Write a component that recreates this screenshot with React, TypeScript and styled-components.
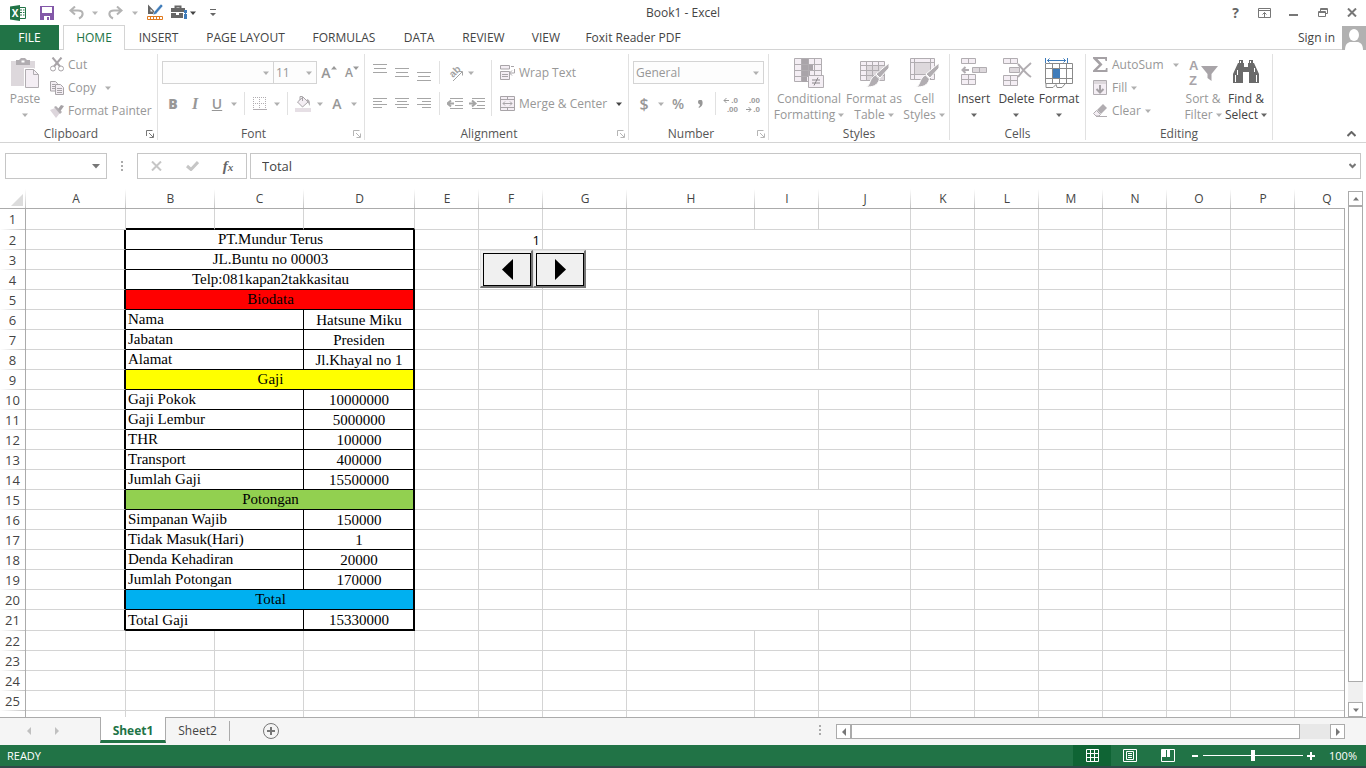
import React from "react";
import styled, { createGlobalStyle, css } from "styled-components";

const UI = `"Open Sans", "Noto Sans", sans-serif`;
const SERIF = `"Liberation Serif", "Times New Roman", serif`;
const GREEN = "#217346";
const LINE = "#d4d4d4";
const EDGE = "#ababab";
const MUTED = "#979797";
const INK = "#444444";
const ICON = "#b1adb1";
const PALE = "#f4eef4";

const GlobalStyle = createGlobalStyle`
  * { box-sizing: border-box; }
  body { margin: 0; background: #fff; font: 12px/16px ${UI}; color: ${INK}; }
  button, input, select { font: inherit; color: inherit; margin: 0; }
  svg { display: block; flex: none; }
`;

/* ---------- shared parts ---------- */

const Window = styled.div`
  display: flex;
  flex-direction: column;
  height: 100vh;
  overflow: hidden;
`;

const PlainButton = styled.button`
  display: flex;
  align-items: center;
  justify-content: center;
  padding: 0;
  border: 0;
  background: none;
  white-space: nowrap;
`;

const Caret = ({ color = MUTED, up = false }: { color?: string; up?: boolean }) => (
  <svg width="6" height="4" viewBox="0 0 6 4" fill={color} aria-hidden="true">
    <path d={up ? "M3 0L6 3.5H0z" : "M0 0.5H6L3 4z"} />
  </svg>
);

/* ---------- title bar ---------- */

const TitleBar = styled.header`
  display: grid;
  grid-template-columns: 1fr auto 1fr;
  align-items: center;
  height: 25px;
  flex: none;
`;

const QuickAccess = styled.div`
  display: flex;
  align-items: center;
  height: 22px;
  padding-left: 3px;
`;

const QuickButton = styled(PlainButton)<{ $w: number }>`
  width: ${(p) => p.$w}px;
  height: 22px;
`;

const WindowButtons = styled.div`
  display: flex;
  justify-content: flex-end;
`;

const WindowButton = styled(PlainButton)`
  width: 29px;
  height: 22px;
  font-size: 14px;
  font-weight: 700;
  color: #666;
`;

const Title = styled.h1`
  margin: 0;
  font-size: 12px;
  font-weight: 400;
  line-height: 24px;
`;

/* ---------- ribbon tabs ---------- */

const TabRow = styled.nav`
  display: flex;
  height: 25px;
  flex: none;
  box-shadow: inset 0 -1px ${LINE};
`;

const FileTab = styled(PlainButton)`
  width: 59px;
  margin-right: 4px;
  background: ${GREEN};
  color: #fff;
`;

const RibbonTab = styled(PlainButton)<{ $w: number; $active?: boolean }>`
  width: ${(p) => p.$w}px;
  ${(p) =>
    p.$active &&
    css`
      color: ${GREEN};
      background: #fff;
      border: 1px solid ${LINE};
      border-bottom: 0;
    `}
`;

const Account = styled.div`
  display: flex;
  align-items: center;
  gap: 7px;
  margin-left: auto;
`;

const SignIn = styled.a`
  color: ${INK};
  text-decoration: none;
  white-space: nowrap;
`;

/* ---------- ribbon ---------- */

const Ribbon = styled.div`
  display: flex;
  height: 93px;
  flex: none;
  padding: 4px 0 2px;
  border-bottom: 1px solid ${LINE};
`;

const GroupBox = styled.section<{ $w: number }>`
  display: flex;
  flex-direction: column;
  flex: none;
  width: ${(p) => p.$w}px;
  height: 86px;
  border-right: 1px solid #e1e1e1;
`;

const GroupBody = styled.div<{ $pad: number }>`
  display: flex;
  height: 74px;
  padding-left: ${(p) => p.$pad}px;
`;

const GroupFoot = styled.div`
  display: flex;
  align-items: center;
  height: 12px;
`;

const GroupName = styled.h2`
  flex: 1;
  margin: 0;
  font-size: 12px;
  font-weight: 400;
  line-height: 12px;
  text-align: center;
  color: #555;
`;

const Launcher = styled(PlainButton)`
  width: 15px;
  height: 12px;
`;

const LabelButton = styled(PlainButton)`
  justify-content: flex-start;
  gap: 4px;
  height: 23px;
  color: ${MUTED};
`;

const Stack = styled.div<{ $w?: number }>`
  display: flex;
  flex-direction: column;
  ${(p) => p.$w && `width: ${p.$w}px;`}

  ${LabelButton} { padding-bottom: 2px; }
`;

const ToolRows = styled.div`
  display: flex;
  flex-direction: column;
  gap: 8px;
  padding-top: 7px;
`;

const ToolRow = styled.div`
  display: flex;
  align-items: center;
  height: 23px;
`;

const ToolButton = styled(PlainButton)<{ $w?: number; $raised?: boolean; $size?: number }>`
  width: ${(p) => p.$w ?? 22}px;
  height: 22px;
  font-size: ${(p) => p.$size ?? 14}px;
  font-weight: 600;
  color: ${MUTED};

  ${(p) => p.$raised && "svg { align-self: flex-start; margin-top: 4px; }"}
`;

const ItalicMark = styled.i`
  font-family: ${SERIF};
  font-weight: 700;
`;

const Divider = styled.span<{ $tall?: boolean }>`
  flex: none;
  width: 1px;
  height: ${(p) => (p.$tall ? 56 : 23)}px;
  margin: ${(p) => (p.$tall ? "6px 4px 0 0" : "0 4px")};
  background: #e1e1e1;
`;

const Gap = styled.span<{ $w: number }>`
  width: ${(p) => p.$w}px;
`;

const BigButton = styled(PlainButton)<{ $w: number; $on?: boolean }>`
  flex-direction: column;
  justify-content: flex-start;
  gap: 3px;
  width: ${(p) => p.$w}px;
  padding-top: 4px;
  color: ${(p) => (p.$on ? INK : MUTED)};
`;

const BigLabel = styled.span`
  display: flex;
  flex-direction: column;
  align-items: center;
`;

const BigLine = styled.span`
  display: flex;
  align-items: center;
  justify-content: center;
  gap: 3px;
  height: 16px;
`;

const ComboBox = styled.div<{ $w: number }>`
  display: grid;
  align-items: center;
  width: ${(p) => p.$w}px;
  height: 23px;
  margin-right: -1px;
  border: 1px solid ${LINE};

  svg {
    grid-area: 1 / 1;
    justify-self: end;
    margin-right: 4px;
    pointer-events: none;
  }
`;

const ComboSelect = styled.select`
  grid-area: 1 / 1;
  width: 100%;
  height: 21px;
  padding: 0 2px;
  border: 0;
  appearance: none;
  background: #fdfdfd;
  color: ${MUTED};
  opacity: 1;
`;

const Collapse = styled(PlainButton)`
  align-self: flex-end;
  width: 20px;
  height: 12px;
  margin-left: auto;
  margin-right: 5px;
`;

const Combo = ({ label, w, value }: { label: string; w: number; value: string }) => (
  <ComboBox $w={w}>
    <ComboSelect aria-label={label} defaultValue={value}>
      <option value={value}>{value}</option>
    </ComboSelect>
    <Caret color="#b0b0b0" />
  </ComboBox>
);

const Group = ({
  name, w, pad = 4, launcher, dark, children,
}: {
  name: string; w: number; pad?: number; launcher?: boolean; dark?: boolean; children: React.ReactNode;
}) => (
  <GroupBox $w={w} aria-label={name}>
    <GroupBody $pad={pad}>{children}</GroupBody>
    <GroupFoot>
      <GroupName>{name}</GroupName>
      {launcher && (
        <Launcher aria-label={`${name} options`}>
          <svg width="8" height="8" viewBox="0 0 8 8" fill="none" stroke={dark ? "#777" : "#b5b5b5"}>
            <path d="M0.500 6V0.500H6.500M3 3L7 7M7.500 3.500V7.500H3.500" />
          </svg>
        </Launcher>
      )}
    </GroupFoot>
  </GroupBox>
);

const Big = ({
  icon, w, lines, on, below,
}: {
  icon: React.ReactNode; w: number; lines: string[]; on?: boolean; below?: boolean;
}) => {
  const color = on ? "#666" : "#b0b0b0";
  return (
    <BigButton $w={w} $on={on}>
      {icon}
      <BigLabel>
        {lines.map((l, i) => (
          <BigLine key={l}>
            {l}
            {!below && i === lines.length - 1 && <Caret color={color} />}
          </BigLine>
        ))}
        {below && <BigLine><Caret color={color} /></BigLine>}
      </BigLabel>
    </BigButton>
  );
};

/* ---------- icons ---------- */

const Lines = ({ rows, y = 0 }: { rows: [number, number][]; y?: number }) => (
  <svg width="14" height="18" viewBox="0 0 14 18" stroke="#a6a6a6">
    {rows.map(([a, b], i) => <path key={i} d={`M${a} ${y + i * 4 + 0.5}H${b}`} />)}
  </svg>
);

const DenseLines = ({ rows }: { rows: [number, number][] }) => (
  <svg width="14" height="12" viewBox="0 0 14 12" stroke="#a6a6a6">
    {rows.map(([a, b], i) => <path key={i} d={`M${a} ${i * 3 + 0.5}H${b}`} />)}
  </svg>
);

const PasteIcon = () => (
  <svg width="28" height="30" viewBox="0 0 28 30">
    <path d="M0 3h24v25H0z" fill="#ddd8dc" />
    <path d="M5 2h3l2-2h4l2 2h3v5H5z" fill={ICON} />
    <path d="M10.500 2.500h3v2h-3z" fill="#fff" />
    <path d="M13 10h10l5 5v15H13z" fill="#fff" />
    <path d="M14.500 11.500h8l5 5v13h-13z" fill={PALE} stroke={ICON} />
    <path d="M22.500 11.500v5h5" fill="none" stroke={ICON} />
  </svg>
);
const CutIcon = () => (
  <svg width="14" height="15" viewBox="0 0 14 15" fill="none" stroke="#a8a4a8">
    <path d="M2.500 0.500L10 9.500M11.500 0.500L4 9.500" strokeWidth="2" />
    <circle cx="3" cy="11.500" r="2.500" />
    <circle cx="11" cy="11.500" r="2.500" />
  </svg>
);
const CopyIcon = () => (
  <svg width="14" height="14" viewBox="0 0 14 14" fill={PALE} stroke="#a8a4a8">
    <path d="M0.500 0.500h5l2 2v7.500h-7z" />
    <path d="M2 3.500h3M2 5.500h3M2 7.500h3" />
    <path d="M5.500 3.500h5l3 3v7h-8z" />
    <path d="M7 7.500h5M7 9.500h5M7 11.500h5" />
  </svg>
);
const PainterIcon = () => (
  <svg width="14" height="14" viewBox="0 0 14 14">
    <path d="M0 6l5-2 5 5-4 5z" fill="#ddd6dc" />
    <path d="M4 3l2-1 6 6-2 2z" fill={ICON} />
    <path d="M8 5l3-4 3 1-3.500 5z" fill="#a5a1a5" />
  </svg>
);
const BordersIcon = () => (
  <svg width="14" height="14" viewBox="0 0 14 14" stroke={ICON} fill="none">
    <path d="M0.500 0V12M6.500 0V12M12.500 0V12M0 0.500H13M0 6.500H13" strokeDasharray="1 1" />
    <path d="M0 12.500H14" />
  </svg>
);
const FillColorIcon = () => (
  <svg width="16" height="17" viewBox="0 0 16 17">
    <path d="M2.500 7L8 2l5 5-5.500 5z" fill={PALE} stroke="#a8a4a8" />
    <path d="M5 5V1.500h2.500V6" fill="none" stroke="#a8a4a8" />
    <path d="M12 4c3 1 3.500 4 2.500 7-1-2-1-4-3-5z" fill={ICON} />
    <path d="M0 13h16v4H0z" fill="#e6dfe5" />
  </svg>
);
const OrientIcon = () => (
  <svg width="18" height="18" viewBox="0 0 18 18">
    <text x="0" y="0" transform="translate(7 14) rotate(-45)" fontSize="10" fontFamily="Liberation Sans" fontWeight="700" fill="#a3a3a3">ab</text>
    <path d="M7 17L16 8M12.500 7.500H16.500V11.500" fill="none" stroke="#a3a3a3" />
  </svg>
);
const IndentIcon = ({ right }: { right?: boolean }) => (
  <svg width="16" height="12" viewBox="0 0 16 12" fill="none" stroke="#a6a6a6">
    <path d="M3 0.500H16M8 3.500H16M8 7.500H16M3 10.500H16" />
    <path d={right ? "M0 5.500H6M3 2.500L6.500 5.500L3 8.500" : "M1 5.500H7M4 2.500L0.500 5.500L4 8.500"} strokeWidth="2" />
  </svg>
);
const WrapIcon = () => (
  <svg width="15" height="15" viewBox="0 0 15 15" fill={PALE} stroke="#a8a4a8">
    <path d="M0.500 0.500h9v3.500h-9zM0.500 6.500h9v8h-9z" />
    <path d="M2 9.500h6M2 11.500h6" />
    <path d="M11 1.500h3M14.500 4v4H10M12 5.500L9.500 8l2.500 2.500" fill="none" />
  </svg>
);
const MergeIcon = () => (
  <svg width="15" height="15" viewBox="0 0 15 15" fill={PALE} stroke="#a8a4a8">
    <path d="M0.500 0.500h14v14h-14zM0.500 3.500h14M0.500 11.500h14M7.500 0.500v3M7.500 11.500v3" />
    <path d="M3 7.500h9M5 5.500L3 7.500l2 2M10 5.500l2 2-2 2" fill="none" />
  </svg>
);
const DecimalIcon = ({ more }: { more?: boolean }) => (
  <svg width="16" height="20" viewBox="0 0 16 20" fontSize="8" fontFamily="Liberation Sans" fontWeight="700" fill="#9a9a9a">
    <text x="15" y="9" textAnchor="end">{more ? ".0" : ".00"}</text>
    <text x="15" y="18" textAnchor="end">{more ? ".00" : ".0"}</text>
    <path d={more ? "M6 6.500H1M3.500 4L1 6.500L3.500 9" : "M1 15.500H6M3.500 13L6 15.500L3.500 18"} fill="none" stroke="#9a9a9a" />
  </svg>
);
const BrushShape = () => (
  <g>
    <path d="M30 5L17 16l4 4L30 10z" fill={ICON} stroke="#fff" />
    <path d="M16.500 17l4 4c-2 7-7 8-13 8 4-2 3-9 9-12z" fill={ICON} stroke="#fff" />
  </g>
);
const ConditionalIcon = () => (
  <svg width="30" height="30" viewBox="0 0 30 30">
    <path d="M0.500 0.500h27v23h-27z" fill={PALE} stroke={ICON} />
    <path d="M8 1h6v5H8zM8 7h11v5H8zM8 13h8v5H8zM8 19h5v5H8z" fill="#a9a4a9" />
    <path d="M7.500 1v23M14.500 1v23M20.500 1v23M1 6.500h27M1 12.500h27M1 18.500h27" stroke={ICON} fill="none" />
    <path d="M14.500 17.500h15v12h-15z" fill={PALE} stroke={ICON} />
    <path d="M18 22h8M18 25h8M24 19.500l-4 8" stroke="#8c888c" fill="none" />
  </svg>
);
const FormatTableIcon = () => (
  <svg width="30" height="30" viewBox="0 0 30 30">
    <path d="M1.500 3.500h24v19h-24z" fill={PALE} stroke={ICON} />
    <path d="M8 8h17v14H8z" fill="#ddd8dc" />
    <path d="M7.500 4v18M13.500 4v18M19.500 4v18M2 7.500h23M2 12.500h23M2 17.500h23" stroke={ICON} fill="none" />
    <BrushShape />
  </svg>
);
const CellStylesIcon = () => (
  <svg width="30" height="30" viewBox="0 0 30 30">
    <path d="M1.500 0.500h24v21h-24z" fill={PALE} stroke={ICON} />
    <path d="M6 5h15v11H6z" fill="#ddd8dc" />
    <path d="M5.500 1v20M21.500 1v20M2 4.500h23M2 16.500h23" stroke={ICON} fill="none" />
    <BrushShape />
  </svg>
);
const InsertIcon = () => (
  <svg width="28" height="30" viewBox="0 0 28 30" fill={PALE} stroke={ICON}>
    <path d="M1.500 0.500h14v5h-14zM8.500 0.500v5M1.500 16.500h14v10h-14zM8.500 16.500v10M1.500 21.500h14" />
    <path d="M12.500 9.500h14v5h-14z" fill="#ddd8dc" />
    <path d="M19.500 9.500v5" />
    <path d="M9 12H3M5.500 9L2.500 12l3 3" fill="none" strokeWidth="2" />
  </svg>
);
const DeleteIcon = () => (
  <svg width="30" height="30" viewBox="0 0 30 30" fill={PALE} stroke={ICON}>
    <path d="M1.500 0.500h14v5h-14zM8.500 0.500v5M1.500 17.500h14v10h-14zM8.500 17.500v10M1.500 22.500h14" />
    <path d="M7.500 9.500h10v5h-10z" fill="#ddd8dc" />
    <path d="M16 6c4 4 7 9 13 13M29 5c-5 4-9 8-13 14" fill="none" strokeWidth="2" />
  </svg>
);
const FormatIcon = () => (
  <svg width="28" height="30" viewBox="0 0 28 30" fill="none" stroke="#8a8a8a">
    <path d="M0.500 5.500h27v20h-27zM7.500 5.500v20M14.500 5.500v20M21.500 5.500v20M0.500 10.500h27M0.500 20.500h27" />
    <path d="M8 11h7v9H8z" fill="#3f7cba" stroke="none" />
    <path d="M1 26v3.500h7l3-3 1 3h5l3-3.500" />
    <path d="M0.500 0v5M22.500 0v5M2 2.500h19M4.500 0.500l-2 2 2 2M18.500 0.500l2 2-2 2" stroke="#3f7cba" />
  </svg>
);
const SumIcon = () => (
  <svg width="15" height="15" viewBox="0 0 15 15">
    <path d="M0 0h14v4h-1.500L12 2H4.500L9.500 7.500 4 13h8.500l0.500-2h1.500v4H0v-1.500L6 7.500 0 1.500z" fill="#a5a1a5" />
  </svg>
);
const FillIcon = () => (
  <svg width="15" height="15" viewBox="0 0 15 15">
    <path d="M0.500 0.500h13v14h-13z" fill={PALE} stroke={ICON} />
    <path d="M1 1h12v3H1z" fill="#ddd8dc" />
    <path d="M7 5v8M3.500 9L7 12.500 10.500 9" fill="none" stroke="#a5a1a5" strokeWidth="2" />
  </svg>
);
const EraserIcon = () => (
  <svg width="15" height="14" viewBox="0 0 15 14">
    <path d="M4 6l6-6 4 4-6 6z" fill={ICON} />
    <path d="M3.500 6.500l4 4-1.500 1.500H3L0.500 9.500z" fill={PALE} stroke={ICON} />
    <path d="M3 12.500h11" stroke={ICON} />
  </svg>
);
const SortIcon = () => (
  <svg width="30" height="30" viewBox="0 0 30 30" fill="#a8a4a8">
    <text x="1" y="12" fontSize="13" fontFamily="Liberation Sans" fontWeight="700">A</text>
    <text x="1" y="27" fontSize="13" fontFamily="Liberation Sans" fontWeight="700">Z</text>
    <path d="M13 8h17l-6.500 8v7l-4-3v-4z" />
  </svg>
);
const FindIcon = () => (
  <svg width="28" height="30" viewBox="0 0 28 30" fill="#6a6a6a">
    <path d="M7 2h4v3h1v4h4V5h1V2h4v3h1l5 11v9h-10V14h-6v11H1v-9L6 5h1z" />
    <path d="M8.500 3v2M18.500 3v2M5.500 12v5M3.500 17v7M24.500 17v7M22.500 10v4" stroke="#fff" fill="none" />
  </svg>
);
const ExcelLogo = () => (
  <svg width="16" height="16" viewBox="0 0 16 16">
    <path d="M8.500 2.500h7v11h-7z" fill="#fff" stroke={GREEN} />
    <path d="M10 5h2M13 5h1.500M10 7.500h2M13 7.500h1.500M10 10h2M13 10h1.500" stroke={GREEN} />
    <path d="M0 1.500L10 0v16L0 14.500z" fill={GREEN} />
    <text x="5" y="12" textAnchor="middle" fontSize="10" fontWeight="700" fontFamily="Open Sans" fill="#fff">X</text>
  </svg>
);
const SaveIcon = () => (
  <svg width="14" height="14" viewBox="0 0 14 14">
    <path d="M0 0h14v14H0z" fill="#8358a8" />
    <path d="M2 1h10v6H2zM4 10h6v4H4z" fill="#fff" />
    <path d="M7 11h2v3H7z" fill="#8358a8" />
  </svg>
);
const UndoIcon = ({ redo }: { redo?: boolean }) => (
  <svg width="15" height="14" viewBox="0 0 15 14" fill="none" stroke="#b3b3b3" strokeWidth="2">
    <path d={redo
      ? "M9 0.500l4.500 4-4.500 4M13 4.500H6C0 4.500 0 10 5 12.500"
      : "M6 0.500l-4.500 4 4.500 4M2 4.500h7c6 0 6 5.500 1 8"} />
  </svg>
);
const DesignIcon = () => (
  <svg width="17" height="17" viewBox="0 0 17 17">
    <path d="M1 0.500L10 10H1z" fill="#666" />
    <path d="M3.500 5v2.500H6z" fill="#fff" />
    <path d="M14 0l2 2-7 8-3 1 1-3z" fill="#3f7cba" stroke="#fff" strokeWidth="0.500" />
    <path d="M0.500 12.500h15v3h-15z" fill="#fff" stroke="#e07a1f" />
    <path d="M3.500 13v2M6.500 13v2M9.500 13v2M12.500 13v2" stroke="#e07a1f" />
  </svg>
);
const ToolboxIcon = () => (
  <svg width="17" height="15" viewBox="0 0 17 15">
    <path d="M4.500 3V1.500h5V3" fill="none" stroke="#666" strokeWidth="2" />
    <path d="M0 3h14v4H0zM0 8h5v2h3V8h4v5H0z" fill="#666" />
    <path d="M13 5h3v3h-1v1h1v5h-3V9h1V8h-1z" fill="#3f7cba" />
  </svg>
);
const AvatarIcon = () => (
  <svg width="24" height="24" viewBox="0 0 24 24">
    <path d="M0 0h24v24H0z" fill="#b1b1b1" />
    <ellipse cx="12" cy="9" rx="5" ry="6" fill="#fff" />
    <path d="M3 24c0-6 3-8 6-8h6c3 0 6 2 6 8z" fill="#fff" />
  </svg>
);

/* ---------- formula bar ---------- */

const FormulaBar = styled.div`
  display: flex;
  flex: none;
  height: 46px;
  padding: 10px 5px;
`;

const BarBox = styled.div<{ $w?: number }>`
  display: flex;
  align-items: center;
  flex: ${(p) => (p.$w ? "none" : "1")};
  ${(p) => p.$w && `width: ${p.$w}px;`}
  height: 26px;
  border: 1px solid #c6c6c6;
  background: #fff;
`;

const BarInput = styled.input<{ $pad: number }>`
  flex: 1;
  min-width: 0;
  height: 24px;
  padding: 0 ${(p) => p.$pad}px;
  border: 0;
  outline: 0;
  background: none;
  font-size: 13px;
`;

const BarButton = styled(PlainButton)<{ $w: number }>`
  width: ${(p) => p.$w}px;
  height: 24px;
`;

const Fx = styled.span`
  font: italic 700 15px/20px ${SERIF};
  color: #666;

  small { font-size: 11px; }
`;

const Dots = styled.span<{ $w: number }>`
  display: flex;
  flex-direction: column;
  align-items: center;
  justify-content: center;
  gap: 2px;
  width: ${(p) => p.$w}px;
  height: 26px;

  i { width: 2px; height: 2px; background: ${EDGE}; }
`;

/* ---------- worksheet ---------- */

const Main = styled.main`
  display: flex;
  flex: 1;
  min-height: 0;
`;

const SheetArea = styled.div`
  position: relative;
  flex: 1;
  min-width: 0;
  overflow: hidden;
`;

const SheetEdge = styled.div`
  width: 1px;
  margin-top: 19px;
  background: ${EDGE};
`;

const Sheet = styled.table`
  table-layout: fixed;
  width: 0;
  border-spacing: 0;
  border-collapse: separate;
`;

const ColHead = styled.th`
  height: 20px;
  padding: 0;
  font-weight: 400;
  font-size: 12px;
  line-height: 19px;
  border-bottom: 1px solid ${EDGE};
  background: linear-gradient(to bottom, #fff, #c4c4c4) right / 1px 100% no-repeat;
`;

const Corner = styled(ColHead)`
  svg { margin: 3px 3px 1px auto; }
`;

const RowHead = styled.th<{ $h: number }>`
  height: ${(p) => p.$h}px;
  padding: 0;
  font-weight: 400;
  font-size: 13px;
  line-height: 19px;
  text-align: center;
  border-right: 1px solid ${EDGE};
  background: linear-gradient(to right, #fff, #c4c4c4) bottom / 100% 1px no-repeat;
`;

type Look = "label" | "value" | "band";

const Cell = styled.td<{ $look?: Look; $fill?: string; $right?: "thick" | "thin"; $bottom?: "thick" | "thin" }>`
  padding: 0 2px 0 0;
  white-space: nowrap;
  font-size: 13px;
  line-height: 18px;
  text-align: right;
  color: #000;
  border-right: 1px solid ${LINE};
  border-bottom: 1px solid ${LINE};
  ${(p) => p.$fill && `background: ${p.$fill};`}
  ${(p) => p.$right && `border-right: ${p.$right === "thick" ? 2 : 1}px solid #000;`}
  ${(p) => p.$bottom && `border-bottom: ${p.$bottom === "thick" ? 2 : 1}px solid #000;`}
  ${(p) =>
    p.$look &&
    css`
      font-family: ${SERIF};
      font-size: 15px;
      vertical-align: ${p.$look === "value" || p.$bottom === "thick" ? "middle" : "top"};
      text-align: ${p.$look === "label" ? "left" : "center"};
      padding: 0 0 0 ${p.$look === "value" ? 1 : 2}px;
    `}
`;

const SpinControl = styled.div`
  position: absolute;
  left: 480px;
  top: 61px;
  display: flex;
`;

const SpinButton = styled.button`
  width: 53px;
  height: 38px;
  padding: 2px 0 0 2px;
  border: 1px solid #e3e3e3;
  border-right: 2px solid #757575;
  border-bottom: 2px solid #757575;
  background: #f0f0f0;
`;

const SpinFace = styled.span`
  display: flex;
  align-items: center;
  justify-content: center;
  width: 48px;
  height: 33px;
  border: 1px solid #000;
`;

const columns: [string, number][] = [
  ["A", 100], ["B", 89], ["C", 89], ["D", 111], ["E", 64], ["F", 64], ["G", 84], ["H", 128],
  ["I", 64], ["J", 92], ["K", 64], ["L", 64], ["M", 64], ["N", 64], ["O", 64], ["P", 64], ["Q", 64],
];

type Entry = { band: string; fill?: string } | { label: string; value: string };

/* Payslip entries occupy B2:D21. */
const slip: Entry[] = [
  { band: "PT.Mundur Terus" },
  { band: "JL.Buntu no 00003" },
  { band: "Telp:081kapan2takkasitau" },
  { band: "Biodata", fill: "#ff0000" },
  { label: "Nama", value: "Hatsune Miku" },
  { label: "Jabatan", value: "Presiden" },
  { label: "Alamat", value: "Jl.Khayal no 1" },
  { band: "Gaji", fill: "#ffff00" },
  { label: "Gaji Pokok", value: "10000000" },
  { label: "Gaji Lembur", value: "5000000" },
  { label: "THR", value: "100000" },
  { label: "Transport", value: "400000" },
  { label: "Jumlah Gaji", value: "15500000" },
  { band: "Potongan", fill: "#92d050" },
  { label: "Simpanan Wajib", value: "150000" },
  { label: "Tidak Masuk(Hari)", value: "1" },
  { label: "Denda Kehadiran", value: "20000" },
  { label: "Jumlah Potongan", value: "170000" },
  { band: "Total", fill: "#00b0f0" },
  { label: "Total Gaji", value: "15330000" },
];

const SheetRow = ({ n }: { n: number }) => {
  const entry = slip[n - 2];
  const bottom = n === 21 ? "thick" : "thin";
  return (
    <tr>
      <RowHead scope="row" $h={n === 1 || n === 21 ? 21 : 20}>{n < 26 ? n : ""}</RowHead>
      <Cell $right={entry ? "thick" : undefined} />
      {!entry && [0, 1, 2].map((i) => <Cell key={i} $bottom={n === 1 ? "thick" : undefined} />)}
      {entry && "band" in entry && (
        <Cell colSpan={3} $look="band" $fill={entry.fill} $right="thick" $bottom={bottom}>{entry.band}</Cell>
      )}
      {entry && "label" in entry && (
        <>
          <Cell colSpan={2} $look="label" $right="thin" $bottom={bottom}>{entry.label}</Cell>
          <Cell $look="value" $right="thick" $bottom={bottom}>{entry.value}</Cell>
        </>
      )}
      <Cell />
      <Cell>{n === 2 ? "1" : ""}</Cell>
      <Cell />
      {!entry && <><Cell /><Cell /><Cell /></>}
      {entry && "band" in entry && <Cell colSpan={3} />}
      {entry && "label" in entry && <><Cell colSpan={2} /><Cell /></>}
      {columns.slice(10).map(([c]) => <Cell key={c} />)}
    </tr>
  );
};

/* ---------- scroll bars ---------- */

const VScroll = styled.div`
  display: flex;
  flex-direction: column;
  width: 15px;
  margin: 2px 3px 0 3px;
  background: #f0f0f0;
`;

const ScrollButton = styled(PlainButton)`
  flex: none;
  width: 15px;
  height: 15px;
  border: 1px solid ${EDGE};
  background: #fff;
`;

const VThumb = styled.div`
  flex: 478 0 0;
  border: 1px solid ${EDGE};
  background: #fff;
`;

const VTrack = styled.div`
  flex: 20 0 0;
`;

/* ---------- sheet tabs ---------- */

const SheetBar = styled.div`
  display: flex;
  flex: none;
  height: 28px;
  padding-right: 21px;
  background: #f5f5f5;
  box-shadow: inset 0 1px ${EDGE};
`;

const TabArrows = styled.div`
  display: flex;
  width: 100px;
  padding-left: 15px;
`;

const TabArrow = styled(PlainButton)`
  width: 28px;
  height: 28px;
`;

const SheetTab = styled.button<{ $w: number; $active?: boolean }>`
  width: ${(p) => p.$w}px;
  height: 26px;
  padding: 2px 0 0;
  border: 0;
  background: none;
  ${(p) =>
    p.$active &&
    css`
      padding-top: 4px;
      font-weight: 700;
      color: ${GREEN};
      background: #fff;
      border: solid ${EDGE};
      border-width: 0 1px;
      border-bottom: 3px solid ${GREEN};
    `}
`;

const TabRule = styled.span`
  width: 1px;
  height: 20px;
  margin-top: 4px;
  background: ${EDGE};
`;

const AddSheet = styled(PlainButton)`
  width: 82px;
  height: 28px;
`;

const HScroll = styled.div`
  display: flex;
  width: 509px;
  height: 15px;
  margin-top: 7px;
  background: #e8e8e8;
`;

const HThumb = styled.div`
  flex: 449 0 0;
  border: 1px solid ${EDGE};
  background: #fff;
`;

const HTrack = styled.div`
  flex: 30 0 0;
`;

const Spacer = styled.span`
  flex: 1;
`;

/* ---------- status bar ---------- */

const StatusBar = styled.footer`
  display: flex;
  align-items: center;
  flex: none;
  height: 23px;
  padding-left: 7px;
  padding-right: 9px;
  color: #fff;
  background: ${GREEN};
  border-bottom: 2px solid #2f4a48;
  font-size: 11px;
`;

const ViewButton = styled(PlainButton)<{ $active?: boolean }>`
  width: 38px;
  height: 21px;
  background: ${(p) => (p.$active ? "#0f6434" : "none")};
`;

const ZoomButton = styled(PlainButton)`
  width: 16px;
  height: 21px;
`;

const ZoomSlider = styled.input`
  width: 100px;
  height: 11px;
  margin: 0;
  appearance: none;
  background: linear-gradient(#fff, #fff) center / 100% 1px no-repeat;

  &::-webkit-slider-thumb {
    appearance: none;
    width: 4px;
    height: 11px;
    background: #fff;
  }
`;

const ZoomValue = styled.output`
  width: 38px;
  text-align: right;
`;

const Arrow = ({ dir, color = "#777" }: { dir: "left" | "right"; color?: string }) => (
  <svg width="4" height="8" viewBox="0 0 4 8" fill={color}>
    <path d={dir === "left" ? "M4 0v8L0 4z" : "M0 0v8l4-4z"} />
  </svg>
);

export default function App() {
  return (
    <Window>
      <GlobalStyle />
      <TitleBar>
        <QuickAccess>
          <QuickButton $w={30} aria-label="Excel"><ExcelLogo /></QuickButton>
          <QuickButton $w={28} aria-label="Save"><SaveIcon /></QuickButton>
          <QuickButton $w={30} aria-label="Undo"><UndoIcon /></QuickButton>
          <QuickButton $w={8} aria-label="Undo list"><Caret color="#b5b5b5" /></QuickButton>
          <QuickButton $w={32} aria-label="Redo"><UndoIcon redo /></QuickButton>
          <QuickButton $w={8} aria-label="Redo list"><Caret color="#b5b5b5" /></QuickButton>
          <QuickButton $w={32} aria-label="Design mode"><DesignIcon /></QuickButton>
          <QuickButton $w={16} aria-label="Toolbox"><ToolboxIcon /></QuickButton>
          <QuickButton $w={12} aria-label="Toolbox list"><Caret color="#444" /></QuickButton>
          <QuickButton $w={28} aria-label="Customize toolbar">
            <svg width="6" height="8" viewBox="0 0 6 8"><path d="M0 0h6v1H0zM0 4h6L3 7z" fill="#666" /></svg>
          </QuickButton>
        </QuickAccess>
        <Title>Book1 - Excel</Title>
        <WindowButtons>
          <WindowButton aria-label="Help">?</WindowButton>
          <WindowButton aria-label="Ribbon display">
            <svg width="13" height="10" viewBox="0 0 13 10" fill="none" stroke="#777">
              <path d="M0.500 0.500h12v9h-12zM0.500 2.500h12M6.500 9V4.500M4.500 6.500l2-2 2 2" />
            </svg>
          </WindowButton>
          <WindowButton aria-label="Minimize">
            <svg width="9" height="8" viewBox="0 0 9 8"><path d="M0 5h9v2H0z" fill="#777" /></svg>
          </WindowButton>
          <WindowButton aria-label="Restore">
            <svg width="10" height="9" viewBox="0 0 10 9" fill="none" stroke="#777">
              <path d="M2.500 3V0.500h7v5H8M0.500 3.500h7v5h-7zM2.500 1.500h7M0.500 4.500h7" />
            </svg>
          </WindowButton>
          <WindowButton aria-label="Close">
            <svg width="10" height="9" viewBox="0 0 10 9" stroke="#777" strokeWidth="2"><path d="M1 0.500l8 8M9 0.500l-8 8" /></svg>
          </WindowButton>
        </WindowButtons>
      </TitleBar>

      <TabRow>
        <FileTab>FILE</FileTab>
        <RibbonTab $w={62} $active>HOME</RibbonTab>
        <RibbonTab $w={67}>INSERT</RibbonTab>
        <RibbonTab $w={107}>PAGE LAYOUT</RibbonTab>
        <RibbonTab $w={90}>FORMULAS</RibbonTab>
        <RibbonTab $w={60}>DATA</RibbonTab>
        <RibbonTab $w={69}>REVIEW</RibbonTab>
        <RibbonTab $w={56}>VIEW</RibbonTab>
        <RibbonTab $w={118}>Foxit Reader PDF</RibbonTab>
        <Account>
          <SignIn href="#">Sign in</SignIn>
          <AvatarIcon />
        </Account>
      </TabRow>

      <Ribbon>
        <Group name="Clipboard" w={158} launcher dark>
          <Big icon={<PasteIcon />} w={42} lines={["Paste"]} below />
          <Gap $w={4} />
          <Stack>
            <LabelButton><CutIcon />Cut</LabelButton>
            <LabelButton><CopyIcon />Copy<Gap $w={1} /><Caret color="#b0b0b0" /></LabelButton>
            <LabelButton><PainterIcon />Format Painter</LabelButton>
          </Stack>
        </Group>

        <Group name="Font" w={207} launcher>
          <ToolRows>
            <ToolRow>
              <Combo label="Font name" w={112} value="" />
              <Combo label="Font size" w={44} value="11" />
              <ToolButton $w={26} $raised aria-label="Grow font">A<Caret color="#999" up /></ToolButton>
              <ToolButton $w={20} $size={12} $raised aria-label="Shrink font">A<Caret color="#999" /></ToolButton>
            </ToolRow>
            <ToolRow>
              <ToolButton aria-label="Bold"><b>B</b></ToolButton>
              <ToolButton $size={16} aria-label="Italic"><ItalicMark>I</ItalicMark></ToolButton>
              <ToolButton aria-label="Underline"><u>U</u></ToolButton>
              <ToolButton $w={12} aria-label="Underline style"><Caret color="#b0b0b0" /></ToolButton>
              <Divider />
              <ToolButton aria-label="Borders"><BordersIcon /></ToolButton>
              <ToolButton $w={12} aria-label="Border list"><Caret color="#b0b0b0" /></ToolButton>
              <Divider />
              <ToolButton aria-label="Fill color"><FillColorIcon /></ToolButton>
              <ToolButton $w={12} aria-label="Fill color list"><Caret color="#b0b0b0" /></ToolButton>
              <ToolButton aria-label="Font color">A</ToolButton>
              <ToolButton $w={12} aria-label="Font color list"><Caret color="#b0b0b0" /></ToolButton>
            </ToolRow>
          </ToolRows>
        </Group>

        <Group name="Alignment" w={264} launcher>
          <ToolRows>
            <ToolRow>
              <ToolButton aria-label="Top align"><Lines y={0} rows={[[0, 14], [1, 13], [0, 14]]} /></ToolButton>
              <ToolButton aria-label="Middle align"><Lines y={4} rows={[[0, 14], [1, 13], [0, 14]]} /></ToolButton>
              <ToolButton aria-label="Bottom align"><Lines y={8} rows={[[0, 14], [1, 13], [0, 14]]} /></ToolButton>
              <Divider />
              <ToolButton aria-label="Orientation"><OrientIcon /></ToolButton>
              <ToolButton $w={10} aria-label="Orientation list"><Caret color="#b0b0b0" /></ToolButton>
            </ToolRow>
            <ToolRow>
              <ToolButton aria-label="Align left"><DenseLines rows={[[0, 14], [0, 9], [0, 14], [0, 9]]} /></ToolButton>
              <ToolButton aria-label="Center"><DenseLines rows={[[0, 14], [2, 12], [0, 14], [2, 12]]} /></ToolButton>
              <ToolButton aria-label="Align right"><DenseLines rows={[[0, 14], [5, 14], [0, 14], [5, 14]]} /></ToolButton>
              <Divider />
              <ToolButton aria-label="Decrease indent"><IndentIcon /></ToolButton>
              <ToolButton aria-label="Increase indent"><IndentIcon right /></ToolButton>
              <Gap $w={3} />
            </ToolRow>
          </ToolRows>
          <Divider $tall />
          <Gap $w={4} />
          <ToolRows>
            <LabelButton><WrapIcon />Wrap Text</LabelButton>
            <LabelButton><MergeIcon />Merge &amp; Center<Gap $w={1} /><Caret color="#444" /></LabelButton>
          </ToolRows>
        </Group>

        <Group name="Number" w={140} launcher>
          <ToolRows>
            <ToolRow><Combo label="Number format" w={131} value="General" /></ToolRow>
            <ToolRow>
              <ToolButton $size={16} aria-label="Currency">$</ToolButton>
              <ToolButton $w={12} aria-label="Currency list"><Caret color="#b0b0b0" /></ToolButton>
              <ToolButton aria-label="Percent">%</ToolButton>
              <ToolButton aria-label="Comma style">
                <svg width="5" height="8" viewBox="0 0 5 8" fill="#979797"><path d="M0 2a2.200 2.200 0 0 1 4.500 0c0.500 3-1 5-3.500 6l-0.500-1c1-0.500 1.500-1.500 1.500-2.500C1 4.500 0 3.500 0 2z" /></svg>
              </ToolButton>
              <Divider />
              <ToolButton aria-label="Increase decimal"><DecimalIcon more /></ToolButton>
              <ToolButton aria-label="Decrease decimal"><DecimalIcon /></ToolButton>
            </ToolRow>
          </ToolRows>
        </Group>

        <Group name="Styles" w={181} pad={5}>
          <Big icon={<ConditionalIcon />} w={70} lines={["Conditional", "Formatting"]} />
          <Big icon={<FormatTableIcon />} w={60} lines={["Format as", "Table"]} />
          <Big icon={<CellStylesIcon />} w={40} lines={["Cell", "Styles"]} />
        </Group>

        <Group name="Cells" w={136}>
          <Big icon={<InsertIcon />} w={40} lines={["Insert"]} on below />
          <Big icon={<DeleteIcon />} w={45} lines={["Delete"]} on below />
          <Big icon={<FormatIcon />} w={40} lines={["Format"]} on below />
        </Group>

        <Group name="Editing" w={187} pad={7}>
          <Stack $w={89}>
            <LabelButton><SumIcon />AutoSum<Gap $w={1} /><Caret color="#b0b0b0" /></LabelButton>
            <LabelButton><FillIcon />Fill<Caret color="#b0b0b0" /></LabelButton>
            <LabelButton><EraserIcon />Clear<Caret color="#b0b0b0" /></LabelButton>
          </Stack>
          <Big icon={<SortIcon />} w={42} lines={["Sort &", "Filter"]} />
          <Big icon={<FindIcon />} w={44} lines={["Find &", "Select"]} on />
        </Group>
        <Collapse aria-label="Collapse ribbon">
          <svg width="9" height="6" viewBox="0 0 9 6" fill="none" stroke="#666" strokeWidth="2"><path d="M0.500 5l4-4 4 4" /></svg>
        </Collapse>
      </Ribbon>

      <FormulaBar>
        <BarBox $w={102}>
          <BarInput $pad={4} aria-label="Name box" />
          <BarButton $w={20} aria-label="Names">
            <svg width="8" height="5" viewBox="0 0 8 5"><path d="M0 0h8L4 4.500z" fill="#777" /></svg>
          </BarButton>
        </BarBox>
        <Dots $w={30}><i /><i /><i /></Dots>
        <BarBox $w={110}>
          <BarButton $w={36} aria-label="Cancel">
            <svg width="11" height="10" viewBox="0 0 11 10" stroke="#c6c6c6" strokeWidth="2"><path d="M1 0.500l9 9M10 0.500l-9 9" /></svg>
          </BarButton>
          <BarButton $w={36} aria-label="Enter">
            <svg width="13" height="10" viewBox="0 0 13 10" fill="none" stroke="#c6c6c6" strokeWidth="3"><path d="M1 5l4 3.500L12 1" /></svg>
          </BarButton>
          <BarButton $w={36} aria-label="Insert function"><Fx>f<small>x</small></Fx></BarButton>
        </BarBox>
        <Gap $w={3} />
        <BarBox>
          <BarInput $pad={11} aria-label="Formula" defaultValue="Total" />
          <BarButton $w={16} aria-label="Expand formula bar">
            <svg width="7" height="6" viewBox="0 0 7 6" fill="none" stroke="#777" strokeWidth="2"><path d="M0.500 1l3 3 3-3" /></svg>
          </BarButton>
        </BarBox>
      </FormulaBar>

      <Main>
        <SheetArea>
          <Sheet>
            <colgroup>
              <col width="26" />
              {columns.map(([c, w]) => <col key={c} width={w} />)}
            </colgroup>
            <thead>
              <tr>
                <Corner aria-label="Select all">
                  <svg width="12" height="12" viewBox="0 0 12 12" fill="#dcdcdc"><path d="M12 0v12H0z" /></svg>
                </Corner>
                {columns.map(([c]) => <ColHead key={c} scope="col">{c}</ColHead>)}
              </tr>
            </thead>
            <tbody>
              {Array.from({ length: 26 }, (_, i) => <SheetRow key={i} n={i + 1} />)}
            </tbody>
          </Sheet>
          <SpinControl>
            <SpinButton aria-label="Previous">
              <SpinFace><svg width="11" height="21" viewBox="0 0 11 21"><path d="M11 0v21L0 10.500z" /></svg></SpinFace>
            </SpinButton>
            <SpinButton aria-label="Next">
              <SpinFace><svg width="11" height="21" viewBox="0 0 11 21"><path d="M0 0v21l11-10.500z" /></svg></SpinFace>
            </SpinButton>
          </SpinControl>
        </SheetArea>
        <SheetEdge />
        <VScroll>
          <ScrollButton aria-label="Scroll up"><Caret color="#777" up /></ScrollButton>
          <VThumb />
          <VTrack />
          <ScrollButton aria-label="Scroll down"><Caret color="#777" /></ScrollButton>
        </VScroll>
      </Main>

      <SheetBar>
        <TabArrows>
          <TabArrow aria-label="Previous sheet"><Arrow dir="left" color="#c0c0c0" /></TabArrow>
          <TabArrow aria-label="Next sheet"><Arrow dir="right" color="#c0c0c0" /></TabArrow>
        </TabArrows>
        <SheetTab $w={66} $active>Sheet1</SheetTab>
        <SheetTab $w={63}>Sheet2</SheetTab>
        <TabRule />
        <AddSheet aria-label="New sheet">
          <svg width="16" height="16" viewBox="0 0 16 16" fill="none" stroke="#777">
            <circle cx="8" cy="8" r="7.500" />
            <path d="M8 4v8M4 8h8" strokeWidth="2" />
          </svg>
        </AddSheet>
        <Spacer />
        <Dots $w={32}><i /><i /><i /></Dots>
        <HScroll>
          <ScrollButton aria-label="Scroll left"><Arrow dir="left" /></ScrollButton>
          <HThumb />
          <HTrack />
          <ScrollButton aria-label="Scroll right"><Arrow dir="right" /></ScrollButton>
        </HScroll>
      </SheetBar>

      <StatusBar>
        READY
        <Spacer />
        <ViewButton $active aria-label="Normal view">
          <svg width="13" height="13" viewBox="0 0 13 13" fill="none" stroke="#fff"><path d="M0.500 0.500h12v12h-12zM4.500 0v13M8.500 0v13M0 4.500h13M0 8.500h13" /></svg>
        </ViewButton>
        <ViewButton aria-label="Page layout view">
          <svg width="14" height="13" viewBox="0 0 14 13" fill="none" stroke="#fff"><path d="M0.500 0.500h13v12h-13zM3.500 2.500h7v8h-7zM5 4.500h4M5 6.500h4M5 8.500h4" /></svg>
        </ViewButton>
        <ViewButton aria-label="Page break preview">
          <svg width="14" height="13" viewBox="0 0 14 13" fill="none" stroke="#fff"><path d="M0.500 0.500h13v12h-13z" /><path d="M1 1h4v7H1zM6 1h3v7H6z" fill="#fff" stroke="none" /></svg>
        </ViewButton>
        <ZoomButton aria-label="Zoom out">
          <svg width="6" height="2" viewBox="0 0 6 2"><path d="M0 0h6v2H0z" fill="#fff" /></svg>
        </ZoomButton>
        <ZoomSlider type="range" aria-label="Zoom" min={0} max={100} defaultValue={50} />
        <ZoomButton aria-label="Zoom in">
          <svg width="8" height="8" viewBox="0 0 8 8"><path d="M3 0h2v3h3v2H5v3H3V5H0V3h3z" fill="#fff" /></svg>
        </ZoomButton>
        <ZoomValue>100%</ZoomValue>
      </StatusBar>
    </Window>
  );
}
